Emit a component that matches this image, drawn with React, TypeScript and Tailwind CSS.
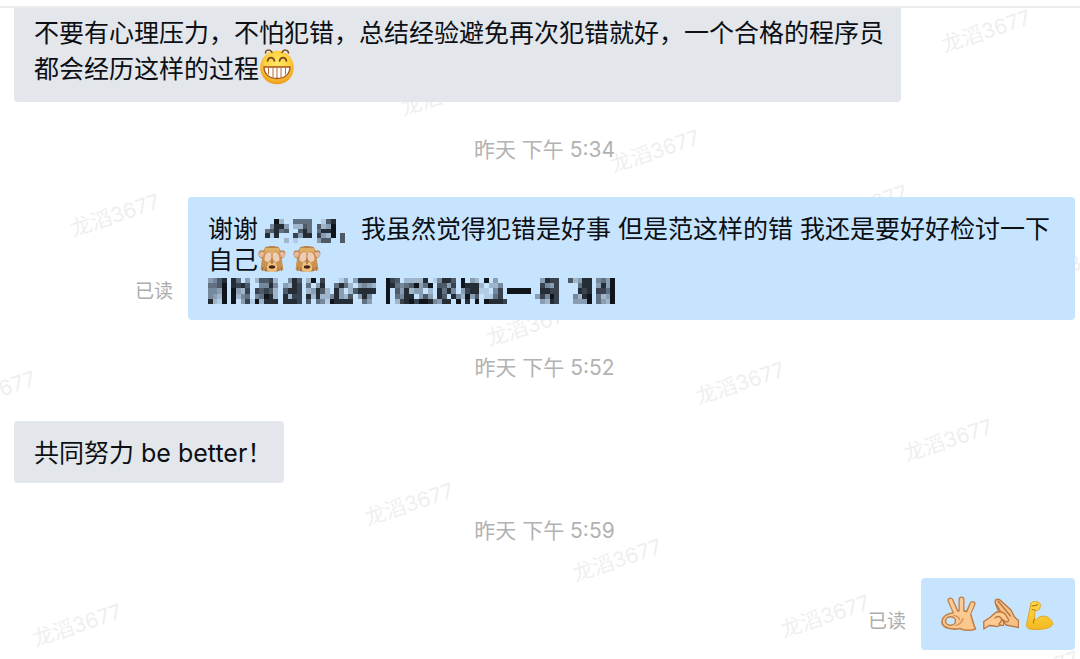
import type { ReactNode } from "react";

const WATERMARK = "龙滔3677";

const WATERMARK_SPOTS = [
  [986, 31], [445, 94], [655, 151], [863, 206], [1072, 264],
  [115, 215], [531, 325], [740, 383], [948, 440],
  [-9, 392], [409, 504], [617, 560], [825, 616], [1034, 672], [77, 625],
];

// One digit per cell, 0 = clear, 9 = almost black
const NAME_CELLS = [
  "00920055550016800",
  "04883022650623900",
  "56856006850588900",
  "81800073880732906",
  "00002010000366006",
];

const LINE_CELLS = [
  "346808503026672004860290700013038888009760222280148860903209030000000003877006238804539",
  "556908786004484032870503800585203432009854569359066370988820224000000007437000058803839",
  "443909327076762068870238620830268888009063823302085840378811047099999008877000087807759",
  "432909245045982082770828224832603840009054880363086084293601157000000037497000428905239",
  "821909037192888088870605419888800530009027897998438809080909888700000003287000333905329",
];

function Mosaic({ cells, className }: { cells: string[]; className: string }) {
  return (
    <svg
      aria-hidden="true"
      viewBox={`0 0 ${cells[0].length} ${cells.length}`}
      preserveAspectRatio="none"
      shapeRendering="crispEdges"
      className={className}
    >
      {cells.map((row, y) =>
        row.split("").map((level, x) =>
          level === "0" ? null : (
            <rect key={`${x}-${y}`} x={x} y={y} width="1" height="1" fill="#060a10" opacity={Number(level) / 9.5} />
          )
        )
      )}
    </svg>
  );
}

function GrinEmoji() {
  return (
    <svg aria-hidden="true" viewBox="0 0 36 36" className="inline-block size-9 align-[-7px]">
      <defs>
        <radialGradient id="grin" cx="50%" cy="38%" r="62%">
          <stop offset="0" stopColor="#ffe866" />
          <stop offset="0.6" stopColor="#fdd03f" />
          <stop offset="1" stopColor="#ee9a1c" />
        </radialGradient>
      </defs>
      <circle cx="18" cy="18.500" r="16.8" fill="url(#grin)" />
      <g fill="none" stroke="#7a4a1e" strokeLinecap="round">
        <path d="M6.500 4c0-3.500 5-4 6.500-.5M23 3.500c1.500-3.500 6-3 6.500.5" strokeWidth="1.500" />
        <path d="M8.500 12c1-4.500 6-4.500 7 0M20.500 12c1-4.500 6-4.500 7 0" strokeWidth="1.700" />
      </g>
      <path d="M5 18h26c0 7-5 11.500-13 11.500s-13-4.500-13-11.500z" fill="#fff" stroke="#a4541b" strokeWidth="1.300" />
      <path d="M9.500 18.500v7M14 18.500v10.500M18 18.500v10.500M22 18.500v10.500M26.500 18.500v7" stroke="#b86a35" strokeWidth="1" />
    </svg>
  );
}

function MonkeyEmoji() {
  return (
    <svg aria-hidden="true" viewBox="0 0 28 28" className="-mt-2 mr-[7px] inline-block size-7 align-[-4px]">
      <path d="M7 2.500c3-2 11-2 14 0l1.500 3H26c2.500 2 1.500 7-2.500 8l1 11-5 2H8l-5-2 1-11C0 12.500-.5 7.500 2 5.500h3.500z" fill="#b8834a" />
      <path d="M6.500 3h15v6h-15z" fill="#dcae66" />
      <circle cx="3.800" cy="9.500" r="2.700" fill="#e7b9a0" />
      <circle cx="24.200" cy="9.500" r="2.700" fill="#e7b9a0" />
      <path d="M7 17h14l-2 8c-2.500 2.500-7.500 2.500-10 0z" fill="#edc080" />
      <path d="M12.700 7c-3-1.500-6.700.5-8 5L2.500 24.500l5.500 1.500 2-8c2.500-2 4-7 2.700-11zM15.300 7c3-1.500 6.700.5 8 5l2.200 12.500L20 26l-2-8c-2.500-2-4-7-2.700-11z" fill="#c99250" />
      <path d="M12.500 7.500C9 6.500 6.500 9 6.500 15c2 2.500 4.500 2.500 6 .5 1.200-2 1.500-6 0-8zM15.500 7.500c3.500-1 6 1.500 6 7.500-2 2.500-4.500 2.500-6 .5-1.200-2-1.500-6 0-8z" fill="#f0cdb2" />
      <path d="M12.500 17.500h3l-1.500 1.600z" fill="#7d4a25" />
      <ellipse cx="14" cy="22" rx="3.200" ry="1.700" fill="#4a1f16" />
      <path d="M5 22l-.8 4M8 22.500l-.5 3.500M20 22.500l.5 3.500M23 22l.8 4" stroke="#8f5c2c" strokeWidth="0.800" />
    </svg>
  );
}

function OkHand() {
  return (
    <svg aria-hidden="true" viewBox="0 0 36 36" className="size-9">
      <g strokeLinecap="round" strokeLinejoin="round">
        <path d="M15.500 18L9.500 4.500M20.500 17L20.500 3.500M26.500 19L31.500 8" stroke="#c07f48" strokeWidth="6" fill="none" />
        <path
          d="M13 16.500c4-3 13-2.500 16.500 1.500 2 5 2.500 10 5 15-5 2-12 1.500-15.500-.5-7 1.500-17 0-18-6-.5-6 6-9 12-10z"
          fill="#fbc78d" stroke="#c07f48" strokeWidth="1.600"
        />
        <path d="M15.500 18.500L9.500 4.500M20.500 18L20.500 3.500M26.500 20L31.500 8" stroke="#fccb94" strokeWidth="3.400" fill="none" />
      </g>
      <ellipse cx="9.500" cy="25" rx="5" ry="4.300" fill="#c7e4ff" stroke="#c07f48" strokeWidth="1.500" />
      <path d="M15 29.500c3.500-1 6-3.500 7-7M13 19.500c3 .5 5 2 5.500 4" fill="none" stroke="#cc8c52" strokeWidth="1.200" strokeLinecap="round" />
    </svg>
  );
}

function CuppedHands() {
  return (
    <svg aria-hidden="true" viewBox="0 0 36 36" className="size-9">
      <g stroke="#b9743c" strokeWidth="1.300" strokeLinecap="round" strokeLinejoin="round">
        <path d="M13.500 3.500c-2 .5-1.500 3-.5 5.500l5.500 13 4.500 7 12.500 2.500V24.500l-4-3.500-3.500-7-11-10c-1.500-1.200-2.500-1-3.500-.5z" fill="#f5c187" />
        <path d="M15 5l12.500 15M13.500 8.500l9 15.500" fill="none" />
        <path d="M.8 25.500l6.200-4 5-4.500c3-2 8-1.500 10 1l3.500 5.500c.5 2-1.500 3-3 2l-3-2 1.500 4.500c-.5 2-2.500 2-4 .5-1 2-3 2.500-5 1.500l-6-.5-5.200 3.500z" fill="#fcca92" />
        <path d="M12 22c2-2 4.500-2 6 0s0 4-2 6" fill="none" />
      </g>
    </svg>
  );
}

function FlexedArm() {
  return (
    <svg aria-hidden="true" viewBox="0 0 30 36" className="h-9 w-[30px]">
      <defs>
        <linearGradient id="arm" x1="0" y1="0" x2="0" y2="1">
          <stop offset="0" stopColor="#ffdc4a" />
          <stop offset="1" stopColor="#f5b820" />
        </linearGradient>
      </defs>
      <path
        d="M6 7c1.500-2 5.500-1.800 8-.5 2 1.500 1.500 4 .5 6.500-1 1.500-2.500 2-4.500 1.500l-.5 8c0 1.500.8 2 2 1 3-4 9-4.500 13-1 3.500 3 4 5.500 2.500 7-4 4-14.500 4.500-22 3.500-2.500-.5-3.500-2-3.500-4z"
        fill="url(#arm)" stroke="#e0a526" strokeWidth="1" strokeLinejoin="round"
      />
      <path d="M7 10c2-1 3.500.5 5.500-1.500M7 13.500l3 .5M9.500 23c-1 1.500-1.500 2.500-1 4" fill="none" stroke="#b97912" strokeWidth="1.200" strokeLinecap="round" />
    </svg>
  );
}

function Bubble({ children, className }: { children: ReactNode; className: string }) {
  return (
    <div className={`max-w-[887px] text-[25px] leading-[31px] text-[#0c0f14] ${className}`}>
      {children}
    </div>
  );
}

function TimeStamp({ time }: { time: string }) {
  return (
    <time className="block py-8 text-center text-[21px] leading-[31px] text-[#b2b2b2]">昨天 下午 {time}</time>
  );
}

function SentMessage({ children }: { children: ReactNode }) {
  return (
    <div className="flex items-end justify-end gap-[15px]">
      <span className="shrink-0 pb-[14px] text-[19px] leading-[28px] text-[#adadad]">已读</span>
      {children}
    </div>
  );
}

export default function App() {
  return (
    <div className="relative isolate min-h-screen overflow-hidden bg-white font-['Inter','Noto_Sans_CJK_SC',sans-serif]">
      <div aria-hidden="true" className="pointer-events-none absolute inset-0 -z-10 overflow-hidden">
        {WATERMARK_SPOTS.map(([left, top]) => (
          <span
            key={`${left}-${top}`}
            className="absolute -translate-1/2 -rotate-18 text-[21px] leading-none whitespace-nowrap text-[#efefef]"
            style={{ left, top }}
          >
            {WATERMARK}
          </span>
        ))}
      </div>

      <header className="h-2 border-b-2 border-[#ececee] bg-white" />

      <main className="pr-[5px] pl-[14px]">
        <Bubble className="w-fit rounded-b-[4px] bg-[#e3e6ea] pt-[10px] pr-[17px] pb-[17px] pl-5">
          不要有心理压力，不怕犯错，总结经验避免再次犯错就好，一个合格的程序员
          <br />
          都会经历这样的过程
          <GrinEmoji />
        </Bubble>

        <TimeStamp time="5:34" />

        <SentMessage>
          <Bubble className="w-full rounded-[4px] bg-[#c7e4ff] pt-[17px] pr-4 pb-[14px] pl-5">
            谢谢 <Mosaic cells={NAME_CELLS} className="mr-4 inline-block h-6 w-20 align-middle" />
            我虽然觉得犯错是好事 但是范这样的错 我还是要好好检讨一下自己
            <MonkeyEmoji />
            <MonkeyEmoji />
            <Mosaic cells={LINE_CELLS} className="my-[2px] block h-[26px] w-[407px]" />
          </Bubble>
        </SentMessage>

        <TimeStamp time="5:52" />

        <Bubble className="mt-[6px] w-fit rounded-[4px] bg-[#e3e6ea] pt-[17px] pr-3 pb-[14px] pl-5">共同努力 be better！</Bubble>

        <TimeStamp time="5:59" />

        <SentMessage>
          <Bubble className="flex gap-[6px] rounded-[4px] bg-[#c7e4ff] px-5 py-[18px]">
            <OkHand />
            <CuppedHands />
            <FlexedArm />
          </Bubble>
        </SentMessage>
      </main>
    </div>
  );
}
